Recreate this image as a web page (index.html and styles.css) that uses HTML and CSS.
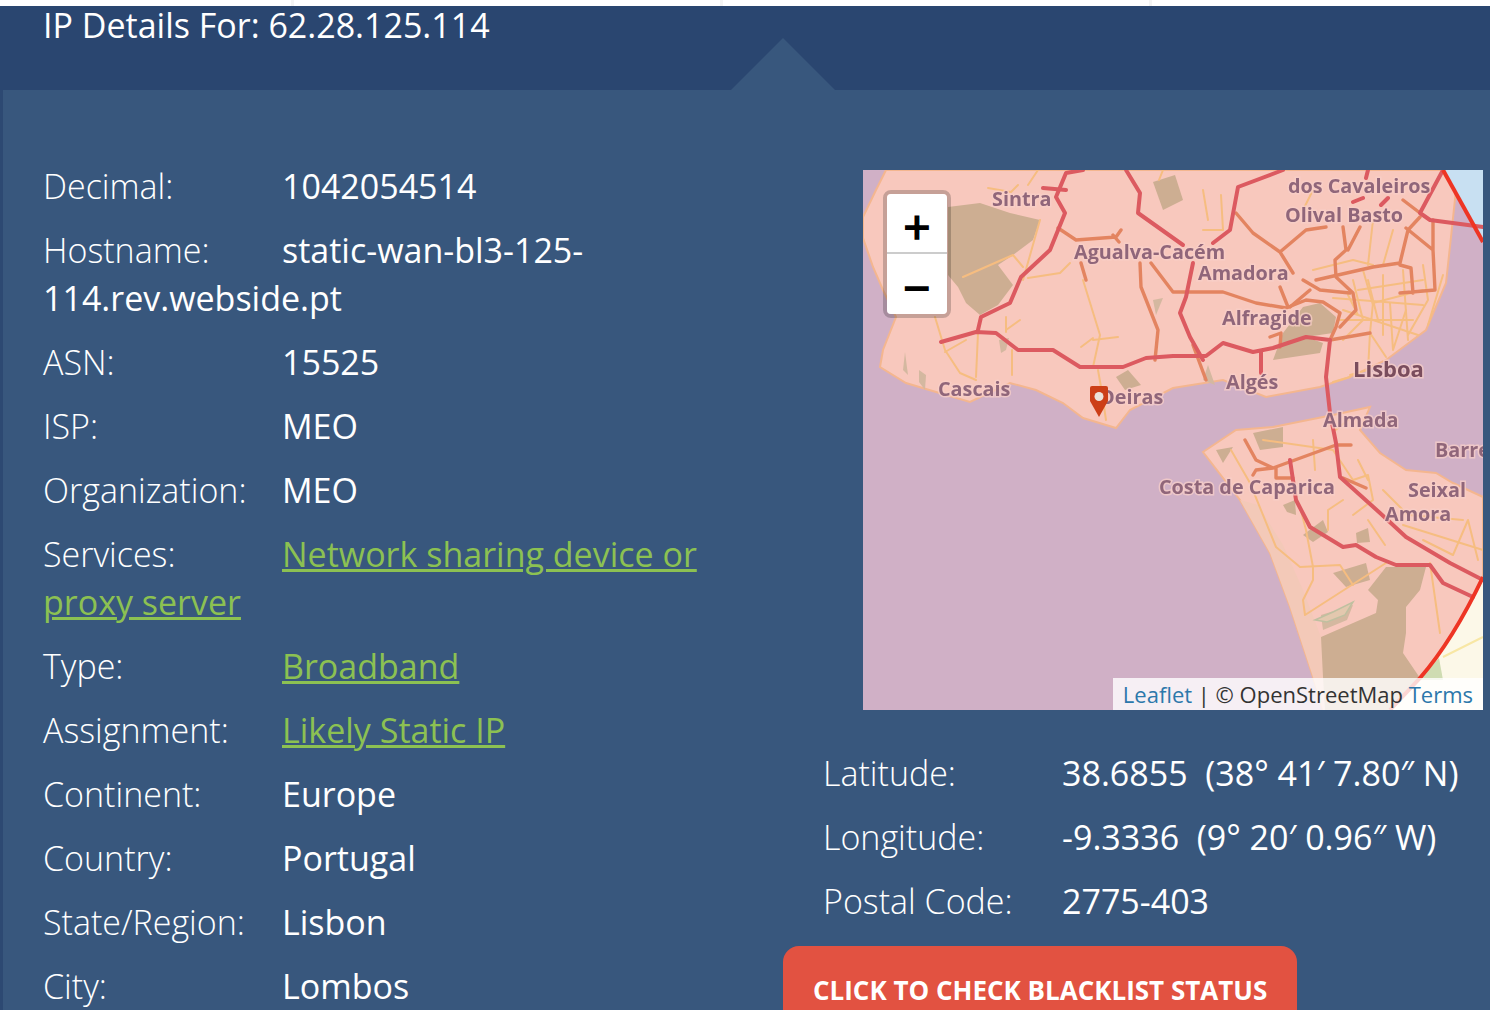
FILE: index.html
```html
<!DOCTYPE html>
<html lang="en">
<head>
    <meta charset="UTF-8">
    <meta name="viewport" content="width=device-width, initial-scale=1.0">
    <title>IP Details For: 62.28.125.114</title>
    <link rel="stylesheet" href="styles.css">
</head>
<body>
    <!-- Top strip -->
    <div class="topStrip">
        <div class="stripCell first"></div>
        <div class="stripCell"></div>
        <div class="stripCell"></div>
    </div>

    <div class="header">
        <h1>IP Details For: 62.28.125.114</h1>
    </div>

    <div class="panel">
        <!-- Left column -->
        <div class="details">
            <p><span class="label">Decimal:</span>1042054514</p>
            <p><span class="label">Hostname:</span>static-wan-bl3-125-114.rev.webside.pt</p>
            <p><span class="label">ASN:</span>15525</p>
            <p><span class="label">ISP:</span>MEO</p>
            <p><span class="label">Organization:</span>MEO</p>
            <p><span class="label">Services:</span><a href="#">Network sharing device or proxy server</a></p>
            <p><span class="label">Type:</span><a href="#">Broadband</a></p>
            <p><span class="label">Assignment:</span><a href="#">Likely Static IP</a></p>
            <p><span class="label">Continent:</span>Europe</p>
            <p><span class="label">Country:</span>Portugal</p>
            <p><span class="label">State/Region:</span>Lisbon</p>
            <p><span class="label">City:</span>Lombos</p>
        </div>

        <!-- Right column -->
        <div class="side">
            <div class="map">
                <svg class="mapArt" viewBox="0 0 620 540" width="620" height="540">
                    <g class="tiles">
                        <rect class="water" width="620" height="540"/>
                        <!-- north bank -->
                        <path class="land" d="M23 0L13 20L0 47V68L10 97L20 120L33 147L20 180L17 197L43 213L73 222L107 232L147 213L173 220L200 233L220 248L253 258L267 240L310 218L360 210L403 227L457 217L487 207L523 190L563 160L583 113L588 67L593 20L597 0Z"/>
                        <!-- south bank -->
                        <path class="land" d="M340 282L373 260L410 257L445 250L470 245L507 237L497 260L517 283L543 300L573 303L590 313L620 327V540H460L450 507L427 437L407 383L377 330Z"/>
                        <path class="beach" d="M377 330L407 383L427 437L450 507L460 540H470L458 467L440 420L420 375L395 335Z"/>

                        <!-- forest -->
                        <path class="forest" d="M85 37L117 33L147 43L177 50L170 70L150 85L135 95L150 115L135 135L117 145L103 133L95 117L85 105Z"/>
                        <path class="forest" d="M420 163L440 137L457 133L473 147L470 163L443 167L460 173L457 183L430 187L410 190Z"/>
                        <path class="forest" d="M458 467L513 443L515 430L505 420L523 397L563 397L557 420L543 437L543 463L540 483L557 508L540 540H462L460 507Z"/>
                        <path class="forest" d="M470 403L503 393L507 410L483 417Z"/>
                        <path class="forest" d="M353 280L370 277L360 293Z"/>
                        <path class="forest" d="M390 263L420 257L420 277L397 280Z"/>
                        <path class="forest" d="M493 363L505 358L507 372L494 373Z"/>
                        <path class="forest" d="M420 335L432 330L433 345L424 342Z"/>
                        <path class="forest" d="M440 365L460 350L465 362L450 372Z"/>
                        <path class="forest" d="M253 207L265 200L278 215L262 220Z"/>
                        <path class="forest" d="M290 12L312 5L320 30L300 40Z"/>
                        <path class="sage" d="M136 170L146 168L143 180L138 183Z"/>
                        <path class="sage" d="M42 182L45 205L40 200Z"/>
                        <path class="sage" d="M56 200L63 205L62 220L56 212Z"/>
                        <path class="sage" d="M290 130L300 128L293 145Z"/>
                        <path class="sage" d="M345 195L352 215L340 210Z"/>
                        <path class="sage" d="M458 445L490 435L484 450L460 460Z"/>
                        <path class="golf" d="M452 450L470 442L490 432L482 445L464 452Z"/>

                        <!-- cream outside the boundary -->
                        <path class="outside" d="M620 407Q590 470 557 508L527 540H620Z"/>
                        <path class="outsideRoad" d="M580 487L620 467"/>
                        <path class="outsideGreen" d="M557 508L576 488L580 510H557Z"/>
                        <path class="river" d="M582 0L620 72V0Z"/>

                        <!-- small roads -->
                        <g class="rdLight">
                            <path d="M160 110L177 50M100 107L150 85L160 97"/>
                            <path d="M220 110L237 165L230 197M230 170L255 167M218 177L230 168"/>
                            <path d="M115 163L113 207M149 180V205M143 160L157 150M143 147V162"/>
                            <path d="M72 147L82 180L97 203L113 210M82 182L103 170"/>
                            <path d="M207 93L197 103L165 108M235 200L238 217L243 250"/>
                            <path d="M165 15L175 0M155 15L148 22L125 18"/>
                            <path d="M296 10L300 0M340 60L360 60L358 25M345 50L340 20"/>
                            <path d="M510 133L507 163L523 187M527 133L530 180M510 133L560 120M543 140L530 180"/>
                            <path d="M490 110L500 150L480 170M500 100L510 135M520 105L520 165M540 100L545 170"/>
                            <path d="M470 128L560 135M475 150L550 150M560 95L565 130L545 165M580 105L565 155"/>
                            <path d="M450 100L490 90L510 95M510 50L505 95M530 60L520 95M440 40L450 20"/>
                            <path d="M487 205L505 200L507 163M470 212L487 207"/>
                            <path d="M485 125L495 145M505 110L515 150M495 120L560 110M480 140L555 165"/>
                            <path d="M368 280L387 313L413 377L437 397L477 395L490 415M450 397V410L440 430L442 445L523 393"/>
                            <path d="M437 337L443 360L450 397M480 330L465 340L465 360M505 350L522 375"/>
                            <path d="M567 393L577 463M540 355L620 380M560 370L590 385L605 350L615 390"/>
                            <path d="M400 270L470 280M450 270L452 300M470 280L490 310L505 305L510 330L490 345"/>
                            <path d="M520 320L545 345L600 350M470 262L485 250M495 290L505 310"/>
                        </g>

                        <!-- orange roads -->
                        <g class="rdOrange">
                            <path d="M195 58L213 70L253 67L258 60M250 65L256 72M218 93L223 110"/>
                            <path d="M277 93L278 117L295 160L292 190M288 93L310 122H360L393 133L423 138L443 130L460 132L477 143L473 157L467 170"/>
                            <path d="M373 43L390 63L417 82L430 103M417 82L443 60L463 57"/>
                            <path d="M480 57L483 80L472 90L473 107L490 123L493 140L477 157M497 57L485 80"/>
                            <path d="M453 110L510 97L537 93L545 60L557 47M543 58L570 80L572 120L537 123M550 123L548 98L537 95M570 50V80"/>
                            <path d="M440 110L457 120L487 123M417 117L425 137M447 120L427 137M407 167L418 163L417 177"/>
                            <path d="M467 170L507 163M540 30L557 43M343 210L330 175"/>
                            <path d="M382 270L393 290L410 298L473 275H488M390 305L393 300L410 298M413 298V308H430M480 308L503 318"/>
                        </g>

                        <!-- motorways -->
                        <g class="rdMain">
                            <path d="M78 172L113 162L133 163L155 180H190L217 197H260L283 188L310 186H343L360 173L390 182L410 178L443 167L467 170L463 207L467 243L473 273L477 307L517 343L543 367L587 393L620 410"/>
                            <path d="M115 160L118 147L147 133L158 107L187 80L202 43L193 27L203 3L220 0"/>
                            <path d="M263 0L277 23L275 43L320 75"/>
                            <path d="M330 93L323 127L317 143L327 167L340 190"/>
                            <path d="M350 73L367 60L375 17L420 0"/>
                            <path d="M580 0L557 43L567 50L620 57"/>
                            <path d="M427 290L433 330L447 357L480 377L493 375L513 387L533 395L567 395L580 413L610 427"/>
                            <path d="M180 18L203 20M398 182V203M505 0L503 8M490 32L500 28M518 35L525 28"/>
                        </g>

                        <!-- boundary -->
                        <path class="boundary" d="M580 0L620 72"/>
                        <path class="boundary" d="M620 407Q590 470 557 508L527 540"/>

                        <!-- place names -->
                        <g class="places">
                            <text x="129" y="36">Sintra</text>
                            <text x="211" y="89">Agualva-Cacém</text>
                            <text x="425" y="23">dos Cavaleiros</text>
                            <text x="422" y="52">Olival Basto</text>
                            <text x="335" y="110">Amadora</text>
                            <text x="359" y="155">Alfragide</text>
                            <text class="big" x="490" y="207">Lisboa</text>
                            <text x="363" y="219">Algés</text>
                            <text x="460" y="257">Almada</text>
                            <text x="75" y="226">Cascais</text>
                            <text x="236" y="234">Oeiras</text>
                            <text x="296" y="324">Costa de Caparica</text>
                            <text x="572" y="287">Barreiro</text>
                            <text x="545" y="327">Seixal</text>
                            <text x="522" y="351">Amora</text>
                        </g>
                    </g>

                    <!-- marker -->
                    <path class="pin" d="M229 216H243Q245 216 245 218V231L236 247L227 231V218Q227 216 229 216Z"/>
                    <circle class="pinDot" cx="236" cy="226.5" r="4.5"/>
                </svg>

                <div class="zoomBox">
                    <button class="zoomBtn">+</button>
                    <button class="zoomBtn">&minus;</button>
                </div>

                <div class="attribution"><a href="#">Leaflet</a> | © OpenStreetMap <a href="#">Terms</a></div>
            </div>

            <div class="geo">
                <p><span class="label">Latitude:</span>38.6855&nbsp; (38° 41′ 7.80″ N)</p>
                <p><span class="label">Longitude:</span>-9.3336&nbsp; (9° 20′ 0.96″ W)</p>
                <p><span class="label">Postal Code:</span>2775-403</p>
            </div>

            <a class="checkBtn" href="#">CLICK TO CHECK BLACKLIST STATUS</a>
        </div>
    </div>
</body>
</html>
```

FILE: styles.css
```css
html, body { margin: 0; height: 100%; overflow: hidden; }
body { font-family: "Open Sans", sans-serif; font-size: 34px; line-height: 48px; color: #fff; background-color: #38577d; }

.topStrip { display: flex; height: 6px; background: #fff; }
.stripCell { width: 426px; border-right: 3px solid #f4f4f4; }
.stripCell.first { width: 291px; }

.header { position: relative; height: 84px; padding-left: 43px; background-color: #2a4670; }
.header h1 { margin: 0; font-size: 34px; font-weight: 400; line-height: 38px; }
.header::after { content: ""; position: absolute; left: 731px; bottom: 0; width: 104px; height: 52px; background-color: #38577d; clip-path: polygon(50% 0, 100% 100%, 0 100%); }

.panel { display: flex; height: 920px; padding-top: 72px; box-sizing: border-box; border-left: 3px solid #2d4972; }
.details { width: 780px; flex: none; box-sizing: border-box; padding: 0 40px; }
.details p, .geo p { margin: 0 0 16px; }
.label { display: inline-block; width: 239px; font-weight: 300; }
a { color: #8cc152; }

.side { flex: none; width: 707px; }
.map { position: relative; width: 620px; height: 540px; margin: 8px 0 39px 80px; overflow: hidden; }
.mapArt { display: block; }
.tiles { filter: blur(0.7px); }
.water { fill: #d0b0c6; }
.land { fill: #f8c8bd; stroke: #f4b68f; stroke-width: 2; }
.beach { fill: #f3c9b8; }
.forest { fill: #cdae92; }
.sage { fill: #d4b8a0; }
.golf { fill: #e3c8ae; stroke: #bfc0a0; stroke-width: 1.5; }
.outside { fill: #fcf8e8; }
.outsideRoad { fill: none; stroke: #f8e7a4; stroke-width: 2; }
.outsideGreen { fill: #cfdcb2; }
.river { fill: #c8e0f2; }
.rdLight, .rdOrange, .rdMain { fill: none; stroke-linejoin: round; stroke-linecap: round; }
.rdLight { stroke: #f6bd80; stroke-width: 2; }
.rdOrange { stroke: #e38460; stroke-width: 3.4; }
.rdMain { stroke: #dc5a60; stroke-width: 4; }
.boundary { fill: none; stroke: #ee3524; stroke-width: 4; }
.places text { font-family: "Open Sans", sans-serif; font-size: 19.8px; font-weight: 700; fill: #90667a; stroke: #f8cfc8; stroke-width: 3px; paint-order: stroke; stroke-opacity: 0.75; }
.places text.big { font-size: 22px; fill: #7a4d5d; }
.pin { fill: #cc3e17; }
.pinDot { fill: #ece2da; }

.zoomBox { position: absolute; left: 20px; top: 20px; width: 60px; border: 4px solid rgba(0, 0, 0, 0.2); border-radius: 8px; background-clip: padding-box; }
.zoomBtn { display: flex; align-items: center; justify-content: center; width: 60px; height: 60px; padding: 8px 0 0; border: none; background: #fff; color: #000; font-family: "Liberation Sans", sans-serif; font-size: 46px; font-weight: 400; line-height: 1; -webkit-text-stroke: 1.5px #000; }
.zoomBtn:first-child { border-bottom: 2px solid #ccc; border-radius: 4px 4px 0 0; }
.zoomBtn:last-child { border-radius: 0 0 4px 4px; }

.attribution { position: absolute; right: 0; bottom: 0; padding: 0 10px; height: 32px; font-size: 22px; line-height: 32px; color: #333; background: rgba(255, 255, 255, 0.8); white-space: nowrap; }
.attribution a { color: #2c78ab; text-decoration: none; }

.geo { padding-left: 40px; }
.checkBtn { display: inline-block; width: 514px; box-sizing: border-box; margin-top: 5px; padding: 27px 30px; border-radius: 16px; background-color: #e25241; color: #fff; font-size: 26px; font-weight: 700; line-height: 34px; text-decoration: none; white-space: nowrap; }
```
